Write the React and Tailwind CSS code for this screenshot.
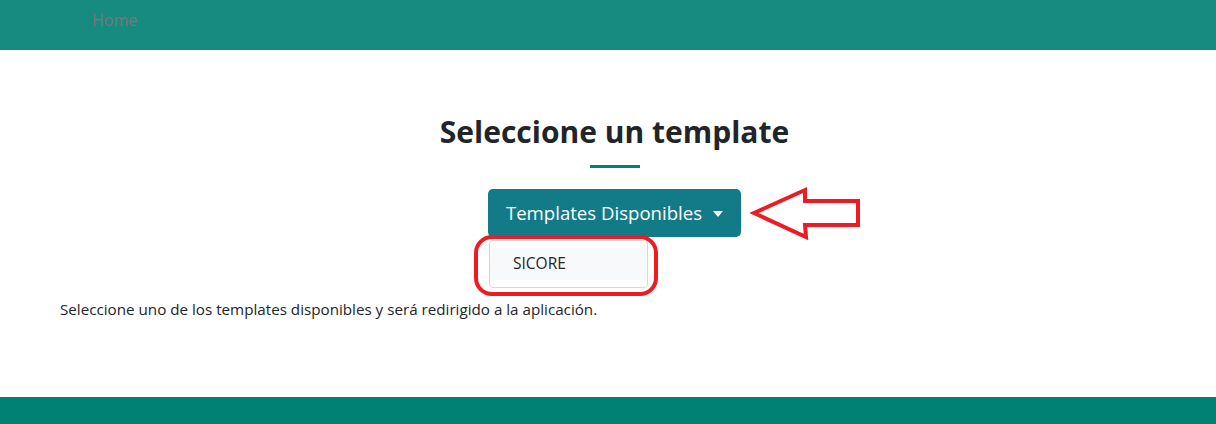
export default function App() {
  return (
    <div className="relative w-[1216px] h-[424px] flex flex-col bg-white text-[#212529] font-['Segoe_UI','Open_Sans',sans-serif] overflow-hidden">
      <header className="h-[50px] shrink-0 bg-[#178b7d] flex items-start pl-[92px] pt-[8px]">
        <span className="text-[#7a7482] text-[16px] leading-[24px]">Home</span>
      </header>
      <main className="flex-1 flex flex-col">
        <div className="flex flex-col items-center pl-[13px]">
          <h2 className="mt-[63px] text-center text-[30px] leading-[38px] font-bold">Seleccione un template</h2>
          <div className="mt-[14px] w-[50px] h-[3px] bg-[#008174]" />
          <div className="relative mt-[21px]">
            <button className="w-[253px] h-[48px] rounded-[5px] bg-[#137a87] text-white text-[18.6px] flex items-center justify-center gap-[11px]">
              <span>Templates Disponibles</span>
              <span className="w-0 h-0 border-l-[5px] border-r-[5px] border-t-[6px] border-l-transparent border-r-transparent border-t-white mt-[1px]" />
            </button>
            <div className="absolute left-[1px] top-[51px] w-[159px] py-[7px] bg-white border border-[#d8d8d8] rounded-[4px]">
              <div className="h-[32px] bg-[#f8f9fa] pl-[23px] flex items-center text-[15.5px] text-[#212529]">SICORE</div>
            </div>
          </div>
        </div>
        <p className="mt-[60px] pl-[60px] text-[15.2px] leading-[24px]">
          Seleccione uno de los templates disponibles y será redirigido a la aplicación.
        </p>
      </main>
      <footer className="h-[27px] shrink-0 bg-[#008174]" />

      <div className="absolute left-[474px] top-[235px] w-[184px] h-[61px] border-4 border-[#ed1c24] rounded-[18px]" />
      <svg className="absolute left-[748px] top-[184px]" width="116" height="60" viewBox="748 184 116 60">
        <polygon
          points="754,213 805,190 805,201 858,201 858,225 805,225 806,237"
          fill="none"
          stroke="#ed1c24"
          strokeWidth="4"
          strokeLinejoin="miter"
        />
      </svg>
    </div>
  );
}
